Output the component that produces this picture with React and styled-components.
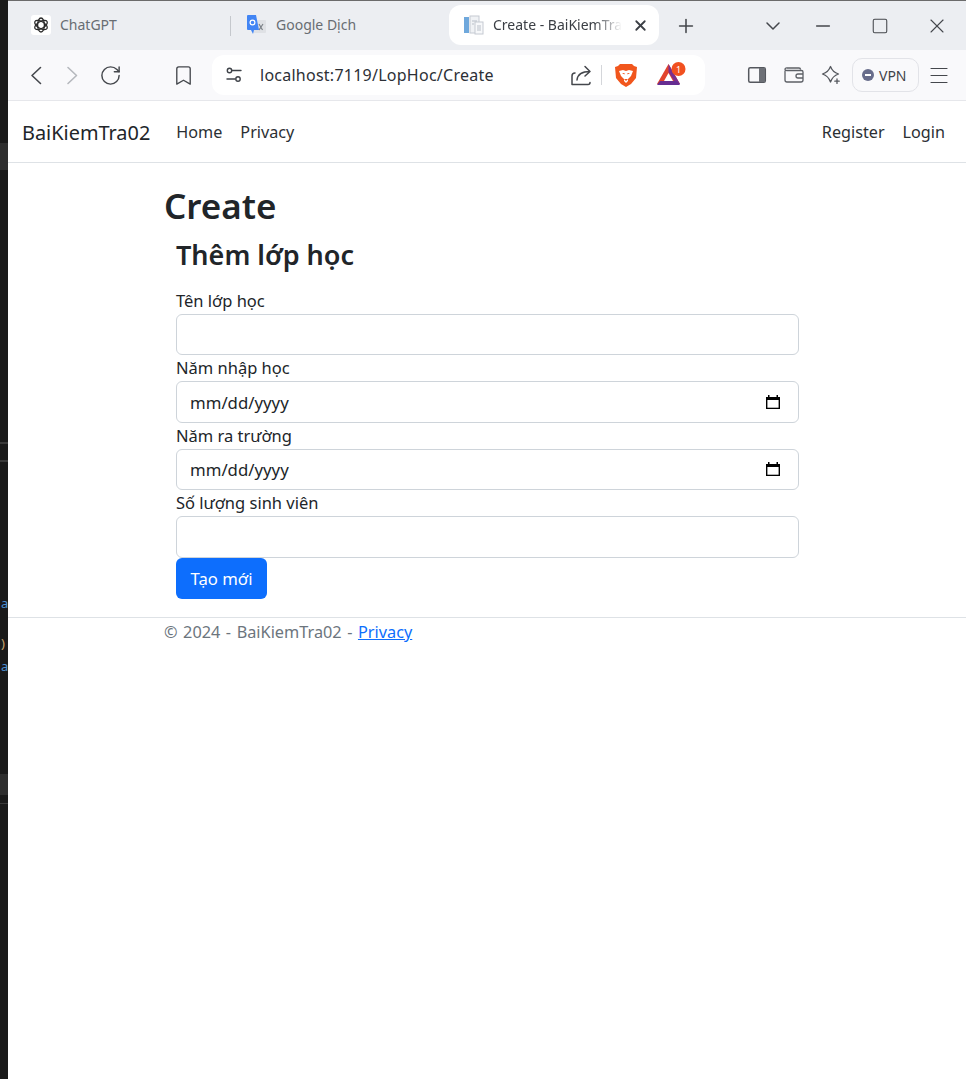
import React from "react";
import styled, { createGlobalStyle } from "styled-components";
import { ChevronDown, RotateCw, Bookmark, Plus, X, Minus, Square, Menu } from "lucide-react";

const Global = createGlobalStyle`
  html, body { margin: 0; padding: 0; background: #fff; }
  body { font-family: "Noto Sans", "Open Sans", sans-serif; color: #212529; }
  * { box-sizing: border-box; }
`;

const Shell = styled.div`
  display: flex;
  min-height: 1079px;
`;

const Strip = styled.div`
  width: 8px;
  flex-shrink: 0;
  background: #1a1a1a;
  overflow: hidden;
  display: flex;
  flex-direction: column;
`;

const StripBand = styled.div`
  height: ${(p) => p.$h}px;
  margin-top: ${(p) => p.$mt}px;
  background: ${(p) => p.$bg || "#2e2e2e"};
  flex-shrink: 0;
`;

const StripGlyph = styled.span`
  height: 16px;
  margin-top: ${(p) => p.$mt}px;
  padding-left: 1px;
  font-size: 13px;
  line-height: 16px;
  color: ${(p) => p.$color || "#4d8fd0"};
  flex-shrink: 0;
`;

const Window = styled.div`
  flex: 1;
  min-width: 0;
  display: flex;
  flex-direction: column;
`;

const TabStrip = styled.div`
  height: 50px;
  background: #eceef2;
  border-top: 1px solid #6b6b6b;
  display: flex;
  align-items: center;
  color: #5f6368;
  font-size: 14px;
`;

const Tab = styled.div`
  width: ${(p) => p.$w}px;
  height: 40px;
  margin-bottom: 1px;
  padding-left: ${(p) => p.$pl}px;
  display: flex;
  align-items: center;
  gap: 9px;
  white-space: nowrap;
  overflow: hidden;
  border-radius: 12px;
  background: ${(p) => (p.$active ? "#fff" : "transparent")};
  color: ${(p) => (p.$active ? "#3b3f45" : "#686d73")};
`;

const TabDivider = styled.div`
  width: 1px;
  height: 20px;
  background: #c5c8cd;
`;

const TabTitle = styled.span`
  padding-bottom: 2px;
  -webkit-mask-image: ${(p) => (p.$fade ? "linear-gradient(90deg, #000 78%, transparent)" : "none")};
  mask-image: ${(p) => (p.$fade ? "linear-gradient(90deg, #000 78%, transparent)" : "none")};
`;

const IconSlot = styled.div`
  width: ${(p) => p.$w || 24}px;
  display: flex;
  align-items: center;
  justify-content: center;
  flex-shrink: 0;
  margin-left: ${(p) => p.$ml || 0}px;
  color: ${(p) => p.$color || "#44474c"};
`;

const Toolbar = styled.div`
  height: 51px;
  background: #f9f9fb;
  border-bottom: 1px solid #e6e7eb;
  display: flex;
  align-items: center;
  color: #55585e;
`;

const UrlBar = styled.div`
  width: 493px;
  height: 40px;
  margin-left: 17px;
  background: #fff;
  border-radius: 12px;
  display: flex;
  align-items: center;
  padding-left: 10px;
  font-size: 16px;
  color: #2c3036;
`;

const UrlText = styled.span`
  margin-left: 14px;
  width: 310px;
  white-space: nowrap;
  letter-spacing: 0.25px;
`;

const UrlDivider = styled.div`
  width: 1px;
  height: 20px;
  background: #d4d6da;
  margin-left: 8px;
`;

const VpnPill = styled.div`
  width: 67px;
  height: 34px;
  margin-left: 9px;
  border: 1px solid #e2e3e8;
  border-radius: 10px;
  display: flex;
  align-items: center;
  padding-left: 9px;
  gap: 5px;
  font-size: 14px;
  color: #3f4349;
`;

const VpnDot = styled.span`
  width: 12px;
  height: 12px;
  border-radius: 50%;
  background: #686d8b;
  display: flex;
  align-items: center;
  justify-content: center;
  &::after {
    content: "";
    width: 6px;
    height: 2px;
    background: #fff;
  }
`;

const Navbar = styled.nav`
  height: 62px;
  border-bottom: 1px solid #dee2e6;
  display: flex;
  align-items: center;
  padding: 1px 21px 0 14px;
  font-size: 16.2px;
`;

const Brand = styled.a`
  font-size: 19.9px;
  color: #212529;
  margin-right: 26px;
`;

const NavLink = styled.a`
  color: #2b2f33;
  margin-right: ${(p) => p.$mr ?? 18}px;
  margin-left: ${(p) => (p.$push ? "auto" : 0)};
`;

const Main = styled.main`
  width: 660px;
  margin-left: 156px;
`;

const Title = styled.h1`
  margin: 19px 0 0;
  font-size: 35px;
  line-height: 48px;
  font-weight: 600;
`;

const FormArea = styled.form`
  width: 623px;
  margin: 0 0 0 12px;
  display: flex;
  flex-direction: column;
  align-items: flex-start;
`;

const FormTitle = styled.h2`
  margin: 6px 0 14px;
  font-size: 27px;
  line-height: 38px;
  font-weight: 600;
`;

const Label = styled.label`
  display: block;
  font-size: 16.5px;
  line-height: 26px;
  color: #212529;
`;

const Field = styled.div`
  width: 100%;
`;

const Input = styled.input`
  display: block;
  width: 100%;
  height: 41.4px;
  padding: 0 13px;
  border: 1px solid #ced4da;
  border-radius: 6px;
  background: #fff;
  font-family: inherit;
  font-size: 16.8px;
  color: #212529;
  outline: none;
`;

const DateBox = styled.div`
  width: 100%;
  height: 41.4px;
  padding: 0 17px 0 13px;
  border: 1px solid #ced4da;
  border-radius: 6px;
  background: #fff;
  font-size: 16.8px;
  color: #212529;
  display: flex;
  align-items: center;
  justify-content: space-between;
`;

const Submit = styled.button`
  height: 41.5px;
  width: 91px;
  border: 0;
  border-radius: 6px;
  background: #0d6efd;
  color: #fff;
  font-family: inherit;
  font-size: 16.7px;
`;

const Footer = styled.footer`
  margin-top: 18px;
  border-top: 1px solid #dee2e6;
  padding-left: 156px;
  font-size: 16.3px;
  word-spacing: 1.3px;
  line-height: 28px;
  color: #6c757d;
`;

const FooterLink = styled.a`
  color: #0d6efd;
  text-decoration: underline;
`;

const CalendarIcon = () => (
  <svg width="16" height="16" viewBox="0 0 16 16">
    <path d="M3 1h1.500v2h7V1H13v2h2v12H1V3h2z" fill="#000" />
    <rect x="2.400" y="6" width="11.200" height="7.700" fill="#fff" />
  </svg>
);

const ChatGptIcon = () => (
  <svg width="20" height="20" viewBox="0 0 20 20">
    <rect width="20" height="20" rx="3" fill="#fff" />
    <g fill="none" stroke="#2b2b2b" strokeWidth="1.300">
      <ellipse cx="10" cy="10" rx="3.400" ry="7" />
      <ellipse cx="10" cy="10" rx="3.400" ry="7" transform="rotate(60 10 10)" />
      <ellipse cx="10" cy="10" rx="3.400" ry="7" transform="rotate(120 10 10)" />
    </g>
  </svg>
);

const TranslateIcon = () => (
  <svg width="20" height="20" viewBox="0 0 20 20">
    <rect x="6" y="5" width="13" height="13" rx="1" fill="#dfe1e5" />
    <path d="M12 9l3.500 6M16 9l-4 6" stroke="#7b8087" strokeWidth="1.200" />
    <path d="M0 1a1 1 0 0 1 1-1h8l3 15H7l-1 4-2-4H1a1 1 0 0 1-1-1z" fill="#4285f4" />
    <circle cx="5.500" cy="7.500" r="2.400" fill="none" stroke="#fff" strokeWidth="1.200" />
  </svg>
);

const DocIcon = () => (
  <svg width="20" height="20" viewBox="0 0 20 20">
    <rect x="0" y="2" width="5" height="16" fill="#6fa8dc" />
    <rect x="6" y="1" width="9" height="17" fill="#f0f2f5" stroke="#c5cad2" />
    <rect x="11" y="7" width="8" height="12" fill="#f7f8fa" stroke="#c5cad2" />
    <path d="M8 6h5M8 9h2M13 11h4M13 13h4M13 15h4" stroke="#b9bfc8" />
  </svg>
);

const NavChevron = ({ flip }) => (
  <svg width="12" height="19" viewBox="0 0 12 19" fill="none" stroke="currentColor" strokeWidth="1.600" strokeLinecap="round" strokeLinejoin="round">
    <path d={flip ? "M2 1.500l8.500 8-8.500 8" : "M10.500 1.500L2 9.500l8.500 8"} />
  </svg>
);

const SlidersIcon = () => (
  <svg width="18" height="18" viewBox="0 0 18 18" fill="none" stroke="#3f4349" strokeWidth="1.400" strokeLinecap="round">
    <circle cx="4.500" cy="4.500" r="2.200" />
    <path d="M7 4.500h9M2 13h8" />
    <circle cx="13" cy="13" r="2.200" />
  </svg>
);

const ShareIcon = () => (
  <svg width="22" height="22" viewBox="0 0 22 22" fill="none" stroke="#44474c" strokeWidth="1.500" strokeLinecap="round" strokeLinejoin="round">
    <path d="M2 20.500h16a2 2 0 0 0 2-2M2 20.500V12a3 3 0 0 1 3-3" />
    <path d="M7 16c.5-5 5-8.500 13-8.500M15 2.500l5 5-5 4.500" />
  </svg>
);

const BraveIcon = () => (
  <svg width="22" height="24" viewBox="0 0 22 24">
    <path d="M5 1h12l2 2 3 1-1 11-5 6-5 3-5-3-5-6L0 4l3-1z" fill="#f1561d" />
    <path d="M4 8l4-1 3 1 3-1 4 1-2 5-3 3v2l-2 2-2-2v-2l-3-3z" fill="#fff" />
    <path d="M7 10h2.500v1.500zM15 10h-2.500v1.500zM9 16h4l-2 2z" fill="#f1561d" />
  </svg>
);

const RewardsIcon = () => (
  <svg width="34" height="28" viewBox="0 0 34 28">
    <path d="M12.500 3L24 23H1z" fill="#e2432c" />
    <path d="M12.500 3L24 23l-4 0-7.500-12z" fill="#7a2e8f" />
    <path d="M1 24h23l-3-4H4z" fill="#662d91" />
    <path d="M12.500 12l4.500 8H8z" fill="#fff" />
    <circle cx="22.500" cy="8" r="7" fill="#f1501f" />
    <text x="22.500" y="11.500" fontSize="9" fill="#fff" textAnchor="middle" fontFamily="Noto Sans, sans-serif">1</text>
  </svg>
);

const SidebarIcon = () => (
  <svg width="20" height="20" viewBox="0 0 20 20">
    <rect x="1.700" y="2.700" width="16.600" height="14.600" rx="1.500" fill="none" stroke="#55585e" strokeWidth="1.500" />
    <rect x="12" y="3" width="6" height="14" fill="#6d7076" />
  </svg>
);

const WalletIcon = () => (
  <svg width="20" height="20" viewBox="0 0 20 20" fill="none" stroke="#5d6066" strokeWidth="1.300">
    <path d="M1 5.500V15a2 2 0 0 0 2 2h14a2 2 0 0 0 2-2V7a1.500 1.500 0 0 0-1.500-1.500H3A2 2 0 0 1 1 4.500 1.500 1.500 0 0 1 3 3h12a1.500 1.500 0 0 1 1.500 1.500" />
    <path d="M19 9h-5a2 2 0 0 0 0 4h5" />
  </svg>
);

const LeoIcon = () => (
  <svg width="20" height="20" viewBox="0 0 20 20" fill="none" stroke="#55585e" strokeWidth="1.300" strokeLinejoin="round" strokeLinecap="round">
    <path d="M9.500 1.500Q11.500 7 17.500 9 11.500 11 9.500 17 7.500 11 1.500 9 7.500 7 9.500 1.500z" />
    <path d="M16 14v4.400M13.800 16.200h4.400" />
  </svg>
);

const App = () => (
  <Shell>
    <Global />
    <Strip>
      <StripBand $mt={143} $h={27} />
      <StripBand $mt={272} $h={2} $bg="#3a3a3a" />
      <StripBand $mt={16} $h={2} $bg="#3a3a3a" />
      <StripGlyph $mt={133}>a</StripGlyph>
      <StripGlyph $mt={24} $color="#c9a36a">)</StripGlyph>
      <StripGlyph $mt={7}>a</StripGlyph>
      <StripBand $mt={100} $h={21} />
      <StripBand $mt={8} $h={1} $bg="#3a3a3a" />
    </Strip>
    <Window>
      <TabStrip>
        <Tab $w={222} $pl={23}><ChatGptIcon /><TabTitle>ChatGPT</TabTitle></Tab>
        <TabDivider />
        <Tab $w={218} $pl={16}><TranslateIcon /><TabTitle>Google Dịch</TabTitle></Tab>
        <Tab $w={210} $pl={15} $active>
          <DocIcon />
          <TabTitle $fade>Create - BaiKiemTra</TabTitle>
          <IconSlot $w={20} $ml={-1} $color="#3b3f45"><X size={17} strokeWidth={2.500} /></IconSlot>
        </Tab>
        <IconSlot $ml={15}><Plus size={22} strokeWidth={1.700} /></IconSlot>
        <IconSlot $ml={63}><ChevronDown size={24} strokeWidth={1.500} /></IconSlot>
        <IconSlot $ml={26}><Minus size={22} strokeWidth={1.400} /></IconSlot>
        <IconSlot $ml={33}><Square size={18} strokeWidth={1.400} /></IconSlot>
        <IconSlot $ml={33}><X size={28} strokeWidth={1.100} /></IconSlot>
      </TabStrip>
      <Toolbar>
        <IconSlot $ml={16}><NavChevron /></IconSlot>
        <IconSlot $ml={12} $color="#b5b8bd"><NavChevron flip /></IconSlot>
        <IconSlot $ml={14}><RotateCw size={23} strokeWidth={1.500} /></IconSlot>
        <IconSlot $ml={49}><Bookmark size={23} strokeWidth={1.400} /></IconSlot>
        <UrlBar>
          <IconSlot><SlidersIcon /></IconSlot>
          <UrlText>localhost:7119/LopHoc/Create</UrlText>
          <IconSlot $ml={-1}><ShareIcon /></IconSlot>
          <UrlDivider />
          <IconSlot $ml={12}><BraveIcon /></IconSlot>
          <IconSlot $w={34} $ml={18}><RewardsIcon /></IconSlot>
        </UrlBar>
        <IconSlot $ml={40}><SidebarIcon /></IconSlot>
        <IconSlot $ml={13}><WalletIcon /></IconSlot>
        <IconSlot $ml={13}><LeoIcon /></IconSlot>
        <VpnPill><VpnDot />VPN</VpnPill>
        <IconSlot $ml={8}><Menu size={27} strokeWidth={1.100} /></IconSlot>
      </Toolbar>
      <Navbar>
        <Brand>BaiKiemTra02</Brand>
        <NavLink>Home</NavLink>
        <NavLink>Privacy</NavLink>
        <NavLink $push>Register</NavLink>
        <NavLink $mr={0}>Login</NavLink>
      </Navbar>
      <Main>
        <Title>Create</Title>
        <FormArea>
          <FormTitle>Thêm lớp học</FormTitle>
          <Field><Label>Tên lớp học</Label><Input /></Field>
          <Field><Label>Năm nhập học</Label><DateBox>mm/dd/yyyy<CalendarIcon /></DateBox></Field>
          <Field><Label>Năm ra trường</Label><DateBox>mm/dd/yyyy<CalendarIcon /></DateBox></Field>
          <Field><Label>Số lượng sinh viên</Label><Input /></Field>
          <Submit type="button">Tạo mới</Submit>
        </FormArea>
      </Main>
      <Footer>© 2024 - BaiKiemTra02 - <FooterLink>Privacy</FooterLink></Footer>
    </Window>
  </Shell>
);

export default App;
